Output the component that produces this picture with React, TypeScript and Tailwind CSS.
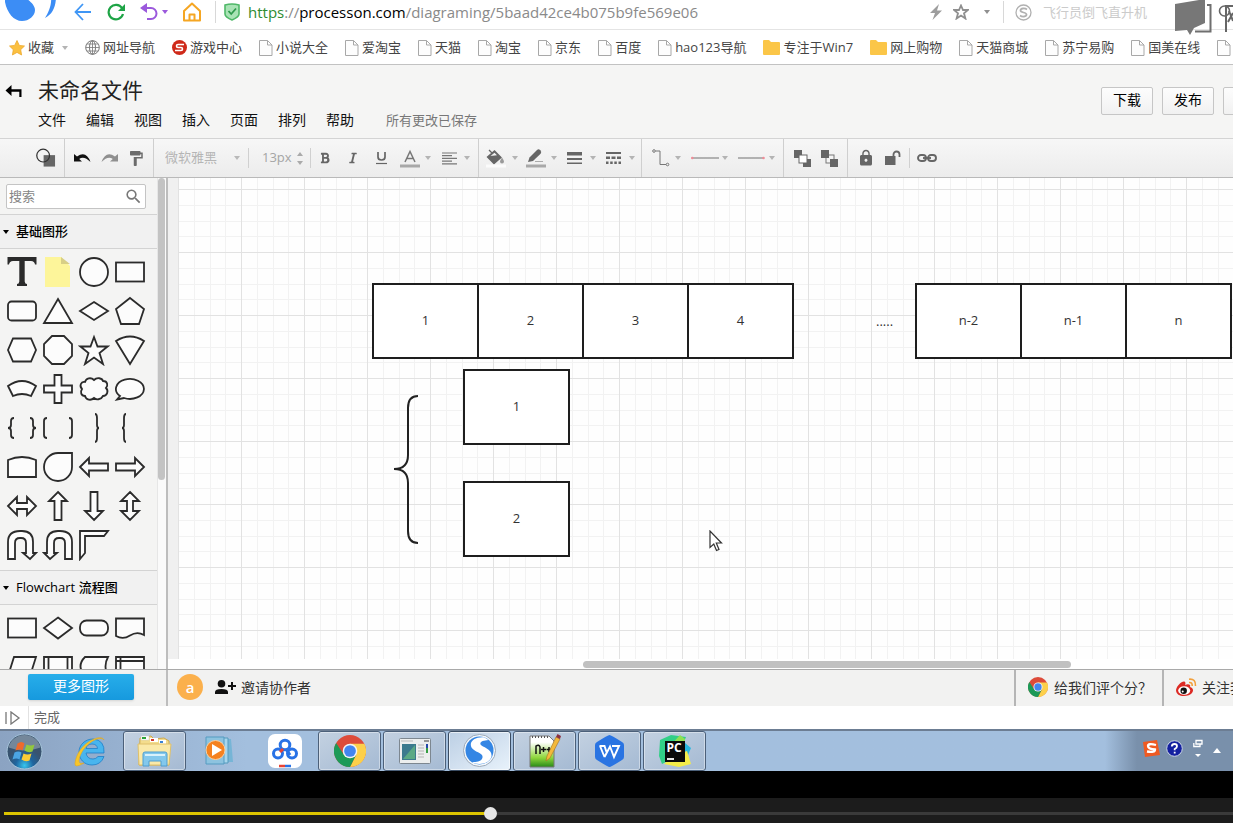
import React from 'react';
import { MdLock, MdFormatPaint, MdSearch } from 'react-icons/md';
import { FaBold, FaItalic } from 'react-icons/fa';

type Kids = { children?: React.ReactNode };

const Caret = ({ className = 'fill-[#b4b4b4]' }: { className?: string }) => (
  <svg className={`shrink-0 ${className}`} width="6" height="4" viewBox="0 0 6 4" aria-hidden="true">
    <path d="M0 0h6L3 4z" />
  </svg>
);

const Chrome = ({ size }: { size: number }) => (
  <svg width={size} height={size} viewBox="-12 -12 24 24" aria-hidden="true">
    <circle r="12" fill="#dd4b3a" />
    <path d="M0-5.4H10.8A12 12 0 0 1 0 12L4.7 2.7Z" fill="#fcd04b" />
    <path d="M-10.4-6L-4.7 2.7 0 5.5 4.7 2.7 0 12A12 12 0 0 1-10.4-6Z" fill="#1d9a58" />
    <circle r="5.5" fill="#f4f4f4" />
    <circle r="4.4" fill="#4385f0" />
  </svg>
);

/* ---------- browser chrome ---------- */

function AddressBar() {
  return (
    <header className="relative flex h-[30px] shrink-0 items-center border-b border-[#e4e4e4] bg-white pb-[5px]">
      <svg className="-mt-[4px] ml-[5px] h-[29px] w-[56px] shrink-0" viewBox="0 0 56 29" aria-hidden="true">
        <path d="M0 6V0H18C22 3 30 8 30 14C30 20 24 25 17 25C9 25 2 17 0 6Z" fill="#3c8df5" />
        <path d="M49 0H51C51 10 48 18 40 22C44 16 47 8 46 0Z" fill="#3c8df5" />
      </svg>
      <button aria-label="后退" className="ml-[13px] shrink-0">
        <svg width="18" height="18" viewBox="0 0 18 18" fill="none" stroke="#3f96f5" strokeWidth="1.8">
          <path d="M9 1L1.5 9L9 17M1.5 9H17" />
        </svg>
      </button>
      <button aria-label="刷新" className="ml-[14px] shrink-0">
        <svg width="20" height="18" viewBox="0 0 20 18" fill="none" stroke="#1ea446" strokeWidth="2.2">
          <path d="M16 5A7.3 7.3 0 1 0 17 11" />
          <path d="M19 1V8H12Z" fill="#1ea446" stroke="none" />
        </svg>
      </button>
      <button aria-label="恢复" className="ml-[14px] flex shrink-0 items-center gap-1">
        <svg width="18" height="18" viewBox="0 0 18 18" fill="none" stroke="#9b59dc" strokeWidth="2">
          <path d="M3 5H11A5.5 5.5 0 0 1 11 16H7" />
          <path d="M7 0V10L0 5Z" fill="#9b59dc" stroke="none" />
        </svg>
        <Caret className="fill-[#9b59dc]" />
      </button>
      <button aria-label="主页" className="ml-[15px] shrink-0">
        <svg width="18" height="20" viewBox="0 0 18 20" fill="none" stroke="#f5a623" strokeWidth="2" strokeLinejoin="round">
          <path d="M1 9L9 1.500L17 9V18.500H1ZM6.500 18V12.500H11.500V18" />
        </svg>
      </button>
      <span className="ml-[14px] h-[22px] w-px shrink-0 bg-[#d8d8d8]" />
      <svg className="ml-2 shrink-0" width="16" height="18" viewBox="0 0 16 18" aria-hidden="true">
        <path d="M1 2Q8 0 15 2V11Q15 14 8 17Q1 14 1 11Z" fill="#a9e3b5" stroke="#4fb868" strokeWidth="1.6" />
        <path d="M4.5 8L7.2 11L12 5.5" fill="none" stroke="#2f9a4d" strokeWidth="1.8" />
      </svg>
      <p className="ml-[8px] flex-1 truncate text-[15px] leading-6 text-[#8a8a8a]">
        <span className="text-[#2e8b30]">https</span>://<span className="text-black">processon.com</span>/diagraming/5baad42ce4b075b9fe569e06
      </p>
      <button aria-label="快速模式" className="shrink-0">
        <svg width="14" height="18" viewBox="0 0 14 18" fill="#9d9d9d"><path d="M10 1L1 10H6L3.500 17L13 7.500H8Z" /></svg>
      </button>
      <button aria-label="收藏此页" className="ml-[10px] shrink-0">
        <svg width="16" height="16" viewBox="0 0 16 16" fill="none" stroke="#8f8f8f" strokeWidth="1.8">
          <path d="M8 1.5L10 6H15L11 9.3L12.4 14.5L8 11.5L3.6 14.5L5 9.3L1 6H6Z" />
        </svg>
      </button>
      <span className="ml-[15px] flex"><Caret className="fill-[#8f8f8f]" /></span>
      <span className="ml-[13px] h-[22px] w-px shrink-0 bg-[#d8d8d8]" />
      <svg className="ml-[11px] shrink-0" width="17" height="17" viewBox="0 0 17 17" fill="none" stroke="#b0b0b0" aria-hidden="true">
        <circle cx="8.5" cy="8.5" r="7.5" strokeWidth="1.3" />
        <path d="M12 5.5C10 4 5.5 4 5.5 6.5C5.5 9 11.5 8 11.5 10.5C11.5 13 7 13 5 11.5" strokeWidth="1.8" />
      </svg>
      <input aria-label="搜索" placeholder="飞行员倒飞直升机" className="ml-[11px] w-[190px] shrink-0 bg-transparent text-[13px] leading-5 outline-none placeholder:text-[#cbcbcb]" />
      <svg className="absolute right-0 -top-px" width="60" height="37" viewBox="0 0 60 37" aria-hidden="true">
        <path d="M34 6H37.500V32.500H22" fill="none" stroke="#6f6f6f" strokeWidth="2" />
        <path d="M2 5L32 0V24L21 29L17 36L14 31L2 32Z" fill="#777" />
        <g fill="none" stroke="#666" strokeWidth="1.6">
          <circle cx="51.500" cy="12" r="5" />
          <path d="M53 33V7H60M60 14L55 23M56 12L60 22" strokeWidth="2" />
        </g>
      </svg>
    </header>
  );
}

const Page = () => (
  <svg width="14" height="16" viewBox="0 0 14 16" fill="#fdfdfd" stroke="#a8a8a8" aria-hidden="true">
    <path d="M.5.5H8.500L13 5V15.500H.5ZM8.500.5V5H13" />
  </svg>
);
const Folder = () => (
  <svg width="17" height="15" viewBox="0 0 17 15" fill="#fbc648" aria-hidden="true">
    <path d="M0 1Q0 0 1 0H6L8 2H16Q17 2 17 3V14Q17 15 16 15H1Q0 15 0 14Z" />
  </svg>
);
const Globe = () => (
  <svg width="15" height="15" viewBox="0 0 15 15" fill="none" stroke="#777" aria-hidden="true">
    <circle cx="7.500" cy="7.500" r="6.800" />
    <ellipse cx="7.500" cy="7.500" rx="3" ry="6.800" />
    <path d="M.7 7.500H14.300M2 4H13M2 11H13M7.500.7V14.300" strokeWidth=".8" />
  </svg>
);
const Game = () => (
  <svg width="15" height="15" viewBox="0 0 15 15" aria-hidden="true">
    <circle cx="7.500" cy="7.500" r="7.500" fill="#cf2a1a" />
    <path d="M12 4.500H6Q4.500 4.500 4.500 6T6 7.500H9Q10.500 7.500 10.500 9T9 10.500H3" fill="none" stroke="#fff" strokeWidth="1.600" />
  </svg>
);

const bookmarks: [string, () => React.JSX.Element][] = [
  ['网址导航', Globe], ['游戏中心', Game], ['小说大全', Page], ['爱淘宝', Page], ['天猫', Page],
  ['淘宝', Page], ['京东', Page], ['百度', Page], ['hao123导航', Page], ['专注于Win7', Folder],
  ['网上购物', Folder], ['天猫商城', Page], ['苏宁易购', Page], ['国美在线', Page], ['优惠', Page],
];

function Bookmarks() {
  return (
    <nav className="flex h-[35px] shrink-0 items-center gap-[17px] overflow-hidden border-b border-[#c2c2c2] bg-white pt-px pl-[9px] text-[13px] text-[#444]">
      <button className="flex shrink-0 items-center">
        <svg width="16" height="16" viewBox="0 0 16 16" aria-hidden="true">
          <path d="M8 .5L10.300 5.400L15.500 6L11.700 9.700L12.600 15L8 12.400L3.400 15L4.300 9.700L.5 6L5.700 5.400Z" fill="#fbc040" stroke="#eda92e" strokeWidth=".8" />
        </svg>
        <span className="mr-2 ml-[3px]">收藏</span>
        <Caret />
      </button>
      {bookmarks.map(([label, Icon]) => (
        <a key={label} href="#" className="flex shrink-0 items-center gap-[3px] whitespace-nowrap">
          <Icon />
          {label}
        </a>
      ))}
    </nav>
  );
}

/* ---------- editor header ---------- */

const PlainButton = ({ children }: Kids) => (
  <button className="h-[28px] w-[52px] shrink-0 rounded-[2px] border border-[#c6c6c6] bg-linear-to-b from-[#fdfdfd] to-[#f1f1f1] pb-[3px] text-[14px] leading-5 text-black">
    {children}
  </button>
);

function EditorHeader() {
  return (
    <div className="flex h-[74px] shrink-0 justify-between overflow-hidden border-b border-[#d4d4d4] bg-[#f5f5f4]">
      <div className="flex">
        <button aria-label="返回" className="mt-[19px] ml-[5px] h-4">
          <svg width="18" height="14" viewBox="0 0 18 14" aria-hidden="true">
            <path d="M.5 5.500L6.500 0V4.200H16.500V12H14.300V6.800H6.500V11Z" fill="#000" />
          </svg>
        </button>
        <div className="ml-[15px] pt-[10px]">
          <h1 className="text-[21px] leading-[30px] text-[#222]">未命名文件</h1>
          <div className="flex items-center gap-5 text-[14px] leading-[30px] text-[#111]">
            {['文件', '编辑', '视图', '插入', '页面', '排列', '帮助'].map((m) => (
              <button key={m}>{m}</button>
            ))}
            <span className="ml-[12px] text-[13px] text-[#777]">所有更改已保存</span>
          </div>
        </div>
      </div>
      <div className="-mr-[42px] flex gap-[9px] pt-[22px]">
        <PlainButton>下载</PlainButton>
        <PlainButton>发布</PlainButton>
        <PlainButton>分享</PlainButton>
      </div>
    </div>
  );
}

/* ---------- toolbar ---------- */

const Group = ({ children, className = '' }: Kids & { className?: string }) => (
  <div className={`flex h-full shrink-0 items-center border-r border-[#cfcfcf] ${className}`}>{children}</div>
);
const Tool = ({ label, children, className = 'w-[18px]' }: Kids & { label: string; className?: string }) => (
  <button aria-label={label} className={`flex h-6 shrink-0 items-center justify-center ${className}`}>{children}</button>
);
const Drop = ({ label, children, className = 'w-[39px]' }: Kids & { label: string; className?: string }) => (
  <button aria-label={label} className={`flex h-6 shrink-0 items-center justify-between pr-[3px] pl-1 ${className}`}>
    {children}
    <Caret />
  </button>
);
const Rule = () => <span className="h-5 w-px shrink-0 bg-[#d0d0d0]" />;

function Toolbar() {
  return (
    <div className="flex h-[39px] shrink-0 items-center overflow-hidden border-b border-[#b9b9b9] bg-linear-to-b from-[#f7f7f7] to-[#ececec] text-[#666]">
      <Group className="w-[65px] justify-end pr-2">
        <Tool label="图形" className="w-5">
          <svg width="21" height="20" viewBox="0 0 21 20">
            <rect x="8" y="7" width="12" height="12" fill="#666" />
            <circle cx="7.500" cy="7.500" r="6.700" fill="none" stroke="#333" strokeWidth="1.300" />
          </svg>
        </Tool>
      </Group>
      <Group className="gap-[9px] px-2">
        <Tool label="撤销">
          <svg width="17" height="10" viewBox="0 0 17 10"><path d="M0 1V8.500H8L5.200 6Q10 2.500 16.500 9Q12-3 3 3.600Z" fill="#111" /></svg>
        </Tool>
        <Tool label="重做">
          <svg width="17" height="10" viewBox="0 0 17 10"><path d="M17 1V8.500H9L11.800 6Q7 2.500.5 9Q5-3 14 3.600Z" fill="#8f8f8f" /></svg>
        </Tool>
        <Tool label="格式刷"><MdFormatPaint className="size-[19px] text-[#6b6b6b]" /></Tool>
      </Group>
      <Group className="pr-[5px] pl-[11px]">
        <label className="flex items-center text-[13px] text-[#b5b5b5]">
          <select aria-label="字体" className="w-[69px] appearance-none bg-transparent outline-none">
            <option>微软雅黑</option>
          </select>
          <Caret className="mr-2 fill-[#b9b9b9]" />
        </label>
        <Rule />
        <input aria-label="字号" defaultValue="13px" className="ml-[13px] w-[35px] bg-transparent text-[13px] text-[#a5a5a5] outline-none" />
        <svg className="mr-[7px]" width="6" height="13" viewBox="0 0 6 13" fill="#aaa" aria-hidden="true"><path d="M0 4L3 0L6 4ZM0 9L3 13L6 9Z" /></svg>
        <Rule />
        <Tool label="加粗" className="w-7"><FaBold className="size-3" /></Tool>
        <Tool label="斜体" className="w-7"><FaItalic className="size-3" /></Tool>
        <Tool label="下划线" className="w-7">
          <svg width="11" height="14" viewBox="0 0 11 14" fill="none" stroke="#666"><path d="M2 1V6Q2 9 5.500 9T9 6V1" strokeWidth="1.700" /><path d="M0 12.500H11" strokeWidth="1.200" /></svg>
        </Tool>
        <Drop label="文字颜色">
          <svg width="22" height="20" viewBox="0 0 22 20" fill="none" stroke="#777"><path d="M6 14L11 3.500L16 14M7.800 10.500H14.200" strokeWidth="1.500" /><path d="M1 18H21" stroke="#a8a8a8" strokeWidth="3" /></svg>
        </Drop>
        <Drop label="对齐">
          <svg className="ml-1" width="16" height="13" viewBox="0 0 16 13" stroke="#777" strokeWidth="1.200"><path d="M0 1H15M0 3.700H10M0 6.400H15M0 9.100H10M0 11.800H15" /></svg>
        </Drop>
      </Group>
      <Group className="px-[3px]">
        <Drop label="填充颜色">
          <svg width="20" height="20" viewBox="0 0 20 20">
            <path d="M3 2L6 5M1.500 9L8.500 3L15 9.500L8 15.500Z" fill="#666" stroke="#666" strokeWidth="1.300" />
            <path d="M4.500 8L8.500 4.800L11 7.300Z" fill="#f2f2f2" />
            <path d="M16 9.500Q18 12.500 18 13.500A2 2 0 0 1 14 13.500Q14 12.500 16 9.500Z" fill="#999" />
            <path d="M0 18H20" stroke="#fbfbfb" strokeWidth="3" />
          </svg>
        </Drop>
        <Drop label="线条颜色">
          <svg width="22" height="20" viewBox="0 0 22 20"><path d="M3 14L4.500 9.500L12 2Q13.500 .5 15.300 2.200T15.600 5.700L8 13Z" fill="#666" /><path d="M10 13.500H18" stroke="#aaa" /><path d="M1 18H21" stroke="#a8a8a8" strokeWidth="3" /></svg>
        </Drop>
        <Drop label="线条宽度">
          <svg className="ml-[3px]" width="15" height="12" viewBox="0 0 15 12" fill="#666"><path d="M0 0H15V3.500H0ZM0 6H15V8H0ZM0 10.500H15V12H0Z" /></svg>
        </Drop>
        <Drop label="线条样式">
          <svg className="ml-[3px]" width="15" height="12" viewBox="0 0 15 12" fill="#666"><path d="M0 0H15V2H0ZM0 4.500H4V7H0ZM5.500 4.500H9.500V7H5.500ZM11 4.500H15V7H11ZM0 9.500H2.500V12H0ZM4.200 9.500H6.700V12H4.200ZM8.300 9.500H10.800V12H8.300ZM12.500 9.500H15V12H12.500Z" /></svg>
        </Drop>
      </Group>
      <Group className="pr-[5px] pl-[3px]">
        <Drop label="连线类型">
          <svg className="ml-[3px]" width="18" height="18" viewBox="0 0 18 18" fill="none" stroke="#777"><path d="M3.500 2H8V15.500H14" /><circle cx="2" cy="2" r="1.300" /><circle cx="15.500" cy="15.500" r="1.300" /></svg>
        </Drop>
        <Drop label="起点" className="w-[47px]">
          <svg className="ml-[3px]" width="28" height="4" viewBox="0 0 28 4"><path d="M1 2H28" stroke="#888" strokeWidth="1.200" /><circle cx="1.300" cy="2" r="1.300" fill="#ee8d98" /></svg>
        </Drop>
        <Drop label="终点" className="w-[47px]">
          <svg className="ml-[3px]" width="28" height="4" viewBox="0 0 28 4"><path d="M0 2H26" stroke="#888" strokeWidth="1.200" /><circle cx="25.500" cy="2" r="1.300" fill="#ee8d98" /></svg>
        </Drop>
      </Group>
      <Group className="gap-[9px] px-[9px]">
        <Tool label="置于顶层">
          <svg width="17" height="17" viewBox="0 0 17 17" fill="#666"><path d="M0 0H8V8H0ZM9 9H17V17H9Z" /><rect x="5" y="5" width="8" height="8" fill="#fff" stroke="#666" /></svg>
        </Tool>
        <Tool label="置于底层">
          <svg width="17" height="17" viewBox="0 0 17 17" fill="#666"><rect x="5" y="5" width="8" height="8" fill="#f4f4f4" stroke="#777" /><path d="M0 0H8V8H0ZM9 9H17V17H9Z" /></svg>
        </Tool>
      </Group>
      <div className="flex shrink-0 items-center pl-1">
        <Tool label="锁定" className="w-[27px]"><MdLock className="size-[18px]" /></Tool>
        <Tool label="解锁" className="w-[27px]">
          <svg width="16" height="16" viewBox="0 0 16 16"><path d="M0 6H10.500V15H0Z" fill="#666" /><path d="M8.500 6V4.500A3 3 0 0 1 14.500 4.500V7" fill="none" stroke="#666" strokeWidth="1.800" /></svg>
        </Tool>
        <span className="flex px-[3px]"><Rule /></span>
        <Tool label="链接" className="w-7">
          <svg width="20" height="8" viewBox="0 0 20 8" fill="none" stroke="#666" strokeWidth="1.900">
            <rect x="1" y="1" width="8" height="6" rx="3" />
            <rect x="11" y="1" width="8" height="6" rx="3" />
            <path d="M6 4H14" />
          </svg>
        </Tool>
      </div>
    </div>
  );
}

/* ---------- shape library ---------- */

const basic: [string, React.ReactNode][] = [
  ['文本', <path fill="#2b2b2b" stroke="none" d="M-14.500-15H14.500V-7.500H13Q12.500-11 9-11H2.700V9.500Q3 12 5 12V14H-5V12Q-3 12-2.700 9.500V-11H-9Q-12.500-11-13-7.500H-14.500Z" />],
  ['便签', <g stroke="none"><path fill="#fdf59a" d="M-13-15H3L12-6V15H-13Z" /><path fill="#d8cf86" d="M3-15L12-8H3Z" /></g>],
  ['圆形', <circle r="14" />],
  ['矩形', <rect x="-14" y="-9.500" width="28" height="19" />],
  ['圆角矩形', <rect x="-14" y="-9.500" width="28" height="19" rx="3.500" />],
  ['三角形', <path d="M0-12L14 12H-14Z" />],
  ['菱形', <path d="M0-9L14 0 0 9-14 0Z" />],
  ['五边形', <path d="M0-13L14-2 9 13H-9L-14-2Z" />],
  ['六边形', <path d="M-9-11.500H9L14 0 9 11.500H-9L-14 0Z" />],
  ['八边形', <path d="M-6-14H6L14-6V6L6 14H-6L-14 6V-6Z" />],
  ['五角星', <path d="M0-13L3.500-3.500H13.500L5.500 3 9 14 0 7.500-9 14-5.500 3-13.500-3.500H-3.500Z" />],
  ['扇形', <path d="M-14-9Q0-18 14-9L0 14Z" />],
  ['弧形', <path d="M-14-3Q0-13 14-3L9 7Q0 3-9 7Z" />],
  ['十字', <path d="M-3.500-14H3.500V-3.500H14V3.500H3.500V14H-3.500V3.500H-14V-3.500H-3.500Z" />],
  ['云', <path d="M-9-7C-8-11-3-12 0-9C3-12 8-11 9-8C14-8 14-3 12-1C15 2 13 7 9 7C7 11 2 11 0 9C-3 12-8 11-9 7C-13 7-14 3-12 0C-15-3-13-8-9-7Z" />],
  ['气泡', <path d="M-10 7A14 10 0 1 1-6 9L-13 10.500Z" />],
  ['大括号', <path fill="none" d="M-8-10Q-11-10-11-7V-3Q-11 0-14 0Q-11 0-11 3V7Q-11 10-8 10M8-10Q11-10 11-7V-3Q11 0 14 0Q11 0 11 3V7Q11 10 8 10" />],
  ['中括号', <path fill="none" d="M-11-10Q-14-10-14-7V7Q-14 10-11 10M11-10Q14-10 14-7V7Q14 10 11 10" />],
  ['右大括号', <path fill="none" d="M1-14Q3-14 3-10V-3Q3 0 5 0Q3 0 3 3V10Q3 14 1 14" />],
  ['左大括号', <path fill="none" d="M-4-14Q-6-14-6-10V-3Q-6 0-8 0Q-6 0-6 3V10Q-6 14-4 14" />],
  ['拱顶', <path d="M-14-7Q0-13 14-7V10H-14Z" />],
  ['水滴', <path d="M14-14H0A14 14 0 1 0 14 0Z" />],
  ['左箭头', <path d="M-14 0L-5-9V-3.500H14V3.500H-5V9Z" />],
  ['右箭头', <path d="M14 0L5-9V-3.500H-14V3.500H5V9Z" />],
  ['双向箭头', <path d="M-14 0L-5-9V-3H5V-9L14 0 5 9V3H-5V9Z" />],
  ['上箭头', <path d="M0-14L9-5H3.500V14H-3.500V-5H-9Z" />],
  ['下箭头', <path d="M0 14L9 5H3.500V-14H-3.500V5H-9Z" />],
  ['上下箭头', <path d="M0-14L9-5H3V5H9L0 14-9 5H-3V-5H-9Z" />],
  ['右转箭头', <path d="M-14 14V-3Q-14-14-2-14H0Q11-14 11-3V8H14L8 14 1 8H4V-2Q4-7-1-7H-2Q-7-7-7-2V14Z" />],
  ['左转箭头', <path d="M14 14V-3Q14-14 2-14H0Q-11-14-11-3V8H-14L-8 14-1 8H-4V-2Q-4-7 1-7H2Q7-7 7-2V14Z" />],
  ['角形', <path d="M-14-14H14L10-9H-9V8L-14 14Z" />],
];

const flow: [string, React.ReactNode][] = [
  ['流程', <rect x="-14" y="-9.500" width="28" height="19" />],
  ['判定', <path d="M0-10.500L14 0 0 10.500-14 0Z" />],
  ['开始结束', <rect x="-14" y="-7.500" width="28" height="15" rx="6.500" />],
  ['文档', <path d="M-14-9.500H14V7Q7 3 0 7.500T-14 8Z" />],
  ['数据', <path d="M-8-10H14L8 9H-14Z" />],
  ['子流程', <path d="M-14-10H14V9H-14ZM-9.500-10V9M9.500-10V9" />],
  ['外部数据', <path d="M-9-10H14Q9-1 14 9H-9Q-18-1-9-10Z" />],
  ['内部存储', <path d="M-14-10H14V9H-14ZM-14-6H14M-9.500-10V9" />],
];

const Shapes = ({ items }: { items: [string, React.ReactNode][] }) => (
  <div className="grid auto-rows-[39px] grid-cols-[repeat(4,36px)] pt-[3px] pl-1">
    {items.map(([name, shape]) => (
      <button key={name} aria-label={name} className="flex items-center justify-center">
        <svg width="32" height="32" viewBox="-16 -16 32 32" fill="#fcfcfc" stroke="#2b2b2b" strokeWidth="1.800">{shape}</svg>
      </button>
    ))}
  </div>
);

const SectionTitle = ({ children }: Kids) => (
  <h2 className="border-y border-[#d3d3d3] bg-[#f1f1f1]">
    <button className="flex h-[33px] w-full items-center gap-[7px] pl-[3px] text-[13px] font-medium text-black">
      <Caret className="fill-black" />
      {children}
    </button>
  </h2>
);

function Sidebar() {
  return (
    <aside className="flex w-[168px] shrink-0 overflow-hidden border-r-2 border-[#bdbdbd] bg-[#fafafa]">
      <div className="min-h-0 w-[158px] overflow-hidden border-r border-[#e6e6e6] bg-[#f4f4f3]">
        <label className="mx-[6px] mt-[6px] mb-[5px] flex h-[25px] w-[140px] items-center justify-between rounded-[2px] border border-[#c4c4c4] bg-white pr-[2px] pl-[2px]">
          <input aria-label="搜索图形" placeholder="搜索" className="w-24 bg-transparent text-[13px] outline-none placeholder:text-[#858585]" />
          <MdSearch className="size-[19px] text-[#777]" />
        </label>
        <SectionTitle>基础图形</SectionTitle>
        <Shapes items={basic} />
        <div className="h-[6px]" />
        <SectionTitle>Flowchart 流程图</SectionTitle>
        <Shapes items={flow} />
      </div>
      <div className="h-[302px] w-[7px] rounded-full bg-[#c3c3c3]" />
    </aside>
  );
}

/* ---------- drawing canvas ---------- */

const nodes = [
  { x: 194, y: 105, t: '1' }, { x: 299, y: 105, t: '2' }, { x: 404, y: 105, t: '3' }, { x: 509, y: 105, t: '4' },
  { x: 737, y: 105, t: 'n-2' }, { x: 842, y: 105, t: 'n-1' }, { x: 947, y: 105, t: 'n' },
  { x: 285, y: 191, t: '1' }, { x: 285, y: 303, t: '2' },
];

function Canvas() {
  return (
    <main className="flex min-w-0 flex-1 flex-col bg-white">
      <div className="relative min-h-0 flex-1 overflow-hidden border-l-[10px] border-[#f0f0f0] bg-[#fefefe]">
        <svg className="absolute inset-0 h-full w-full" aria-hidden="true">
          <defs>
            <pattern id="grid" width="63" height="63" y="11" patternUnits="userSpaceOnUse">
              <path d="M16.500 0V63M32.500 0V63M47.500 0V63M0 16.500H63M0 32.500H63M0 47.500H63" stroke="#f2f2f2" />
              <path d="M.5 0V63M0 .5H63" stroke="#e2e2e2" />
            </pattern>
          </defs>
          <rect width="100%" height="100%" fill="url(#grid)" />
        </svg>
        {nodes.map((n) => (
          <div
            key={`${n.x}-${n.y}`}
            className="absolute flex h-[76px] w-[107px] items-center justify-center border-2 border-[#1e1e1e] bg-white text-[13px] text-[#333]"
            style={{ left: n.x, top: n.y }}
          >
            {n.t}
          </div>
        ))}
        <span className="absolute top-[133px] left-[698px] text-[13px] leading-5 text-[#333]">.....</span>
        <svg className="absolute top-[217px] left-[215px]" width="26" height="150" viewBox="0 0 26 150" fill="none" stroke="#222" strokeWidth="2">
          <path d="M25 1Q15 1 15 13V60Q15 74 1 74Q15 74 15 88V136Q15 148 25 148" />
        </svg>
        <svg className="absolute top-[352px] left-[531px]" width="14" height="22" viewBox="0 0 14 22" fill="#fff" stroke="#333" strokeWidth="1.200">
          <path d="M1 1V17.500L4.800 14L7.500 20.500L10 19.500L7.300 13H12.500Z" />
        </svg>
      </div>
      <div className="flex h-[10px] shrink-0 items-center bg-white pl-[39%]">
        <div className="h-[7px] w-3/4 rounded-full bg-[#c1c1c1]" />
      </div>
    </main>
  );
}

/* ---------- footer, status, taskbar ---------- */

function Footer() {
  return (
    <footer className="flex h-[37px] shrink-0 overflow-hidden border-t border-[#a9a9a9] bg-[#f2f2f1] text-[14px] text-[#333]">
      <div className="w-[168px] shrink-0 border-r-2 border-[#bdbdbd] pt-1 pl-7">
        <button className="h-[26px] w-[106px] rounded-[2px] bg-linear-to-b from-[#27aeea] to-[#1699de] pb-[3px] text-[14px] leading-5 text-white shadow-sm">更多图形</button>
      </div>
      <div className="flex min-w-0 flex-1 items-center pb-[2px] pl-[9px]">
        <span className="flex size-[26px] items-center justify-center rounded-full bg-[#fbb04c] text-[15px] font-semibold text-white">a</span>
        <button className="ml-3 flex items-center gap-[5px]">
          <svg width="21" height="15" viewBox="0 0 21 15" fill="#111" aria-hidden="true">
            <circle cx="6.500" cy="3.800" r="3.800" />
            <path d="M0 14V12Q0 9 6.500 9T13 12V14ZM16 2H18V5H21V7H18V10H16V7H13V5H16Z" />
          </svg>
          邀请协作者
        </button>
      </div>
      <a href="#" className="flex w-[148px] shrink-0 items-center gap-[6px] border-l-2 border-[#b5b5b5] pb-[2px] pl-3 whitespace-nowrap">
        <Chrome size={20} />
        给我们评个分？
      </a>
      <a href="#" className="flex w-[71px] shrink-0 items-center gap-[5px] overflow-hidden border-l-2 border-[#b5b5b5] pb-[2px] pl-3 whitespace-nowrap">
        <svg className="shrink-0" width="21" height="19" viewBox="0 0 21 19" aria-hidden="true">
          <path d="M0 12C1 7 7 2 9 4C10 5 9 7 9 7C13 5 15 7 14 9C17 10 18 12 16 15C13 19 0 20 0 12Z" fill="#dc2a24" />
          <ellipse cx="8.200" cy="12.500" rx="6" ry="4.300" fill="#fff" />
          <circle cx="7.700" cy="12.700" r="3.200" fill="#111" />
          <circle cx="6.700" cy="13.500" r="1" fill="#fff" />
          <path d="M13 1.200Q20 .5 19.500 8M13 4.500Q16.500 4 16.200 8" fill="none" stroke="#f2a03c" strokeWidth="1.600" />
        </svg>
        关注我们
      </a>
    </footer>
  );
}

function Status() {
  return (
    <div className="flex h-[23px] shrink-0 items-center bg-white text-[13px] text-[#666]">
      <button aria-label="展开" className="flex w-[29px] shrink-0 self-stretch border-r border-[#e2e2e2] pt-[5px] pl-[5px]">
        <svg width="16" height="14" viewBox="0 0 16 14" fill="none" stroke="#777" strokeWidth="1.300"><path d="M1 1V13M6 1L14 7L6 13Z" /></svg>
      </button>
      <span className="ml-[5px]">完成</span>
    </div>
  );
}

const apps: { name: string; open?: boolean; active?: boolean; icon: React.ReactNode }[] = [
  { name: 'Internet Explorer', icon: (
    <svg width="34" height="34" viewBox="0 0 34 34">
      <path d="M31 19H13Q14 25 20 25Q23 25 25 22.500H31Q28 31 19 31C11 31 6 25 6 18S12 5 20 5Q32 6 31 19ZM13 14.500H24.500Q24 10 19 10T13 14.500Z" fill="#48b5ee" stroke="#1f7fc8" strokeWidth=".8" />
      <path d="M31 6C29-1 5 8 2 29Q1 35 11 29C5 31 5 26 8 20C13 9 27 1 31 6Z" fill="#f7c52a" stroke="#e0a417" strokeWidth=".5" />
    </svg>) },
  { name: '资源管理器', open: true, icon: (
    <svg width="35" height="32" viewBox="0 0 35 32">
      <path d="M3 3L14 1L17 4L27 3L32 6V30H2Z" fill="#f3dc8d" stroke="#cda94e" />
      <path d="M4 1H12V5H4Z" fill="#fff" stroke="#ccc" strokeWidth=".5" /><path d="M5 2H9V4H5Z" fill="#2aa33a" />
      <path d="M13 3H21V7H13Z" fill="#fff" /><path d="M14 4H17V6H14Z" fill="#d5392b" /><path d="M22 5H29V9H22Z" fill="#fff" /><path d="M23 6H26V8H23Z" fill="#3a82d5" />
      <path d="M1 9H34L32 30H2Z" fill="#fae9a9" stroke="#dfc06a" />
      <path d="M6 31V19Q6 17 8 17H28Q30 17 30 19V31H24V26H12V31Z" fill="#83c8ec" stroke="#4f9ed0" />
      <path d="M8 20H28" stroke="#d8f1fb" strokeWidth="2" />
    </svg>) },
  { name: '媒体播放器', icon: (
    <svg width="31" height="29" viewBox="0 0 31 29">
      <path d="M10 3H27L29 26H10Z" fill="#76b5d6" /><path d="M6 2H24V27H6Z" fill="#a8d6ec" stroke="#559abc" /><path d="M2 1H20V28H2Z" fill="#8dc3df" stroke="#549bc1" />
      <circle cx="11.500" cy="14" r="9.500" fill="#f58220" stroke="#fbd0a2" /><path d="M8 8L18 14L8 20Z" fill="#fff" />
    </svg>) },
  { name: '百度网盘', icon: (
    <svg width="34" height="34" viewBox="0 0 34 34">
      <rect width="34" height="34" rx="7" fill="#fff" />
      <g fill="none" strokeWidth="3"><circle cx="17" cy="11" r="4.800" stroke="#2872e6" /><circle cx="10" cy="19.500" r="4.500" stroke="#2872e6" /><circle cx="24" cy="19.500" r="4.500" stroke="#2872e6" /><path d="M15 15L12 18" stroke="#e84335" /><path d="M18 15L22 21" stroke="#2872e6" /></g>
      <path d="M11 32H17" stroke="#e84335" strokeWidth="2.500" /><path d="M17 32H23" stroke="#2872e6" strokeWidth="2.500" />
    </svg>) },
  { name: 'Chrome', open: true, icon: <Chrome size={32} /> },
  { name: '窗口', open: true, icon: (
    <svg width="32" height="26" viewBox="0 0 32 26">
      <rect x=".5" y=".5" width="31" height="25" rx="1" fill="#eceeee" stroke="#7d8790" />
      <path d="M2 3H14" stroke="#bbb" /><path d="M25 3H30" stroke="#777" strokeWidth="1.500" /><rect x="3" y="6" width="14" height="16" fill="#3b7a8e" /><path d="M4 21L16 7V21Z" fill="#5aa985" />
      <path d="M19 7H25M19 10H25M19 13H25M19 16H25M19 19H25" stroke="#b4b4b4" /><path d="M27 6H29V10H27Z" fill="#2349a8" /><path d="M27 10H29V15H27Z" fill="#349e42" />
    </svg>) },
  { name: '搜狗浏览器', open: true, active: true, icon: (
    <svg width="33" height="33" viewBox="-16.500 -16.500 33 33">
      <circle r="16" fill="#f4f8fc" stroke="#9ba9b9" /><circle r="14" fill="#3486e4" />
      <path d="M5-13C-4-14-11-9-8-3C-5 2 4 2 3 7C2 11-3 12-8 11.500C-2 15 10 14 12 6C13-2 3-3 1-6C0-9 4-10 9-10.500Z" fill="#fff" />
    </svg>) },
  { name: 'Notepad++', open: true, icon: (
    <svg width="32" height="34" viewBox="0 0 32 34">
      <defs><linearGradient id="np" x1="0" y1="0" x2="0" y2="1"><stop offset=".2" stopColor="#fff" /><stop offset=".7" stopColor="#8fd63c" /><stop offset="1" stopColor="#278a18" /></linearGradient></defs>
      <path d="M1 2H20L25 7V33H1Z" fill="url(#np)" stroke="#777" /><path d="M3 3H19" stroke="#555" strokeDasharray="1 2" strokeWidth="2" />
      <path d="M7 20V12Q10 10 11 13V20M12 15.500H17M14.500 13V18M17.500 15.500H22.500M20 13V18" fill="none" stroke="#111" strokeWidth="1.500" />
      <path d="M17 27L18 22L27 3L31 5L21 24Z" fill="#f3b93b" stroke="#a86f22" strokeWidth=".6" /><path d="M27 3L28.500 0L32 2L31 5Z" fill="#8c3140" />
    </svg>) },
  { name: 'WPS', open: true, icon: (
    <svg width="31" height="34" viewBox="0 0 31 34">
      <path d="M15.500 1Q17 1 28 8Q30 9 30 11V23Q30 25 28 26Q17 33 15.500 33T3 26Q1 25 1 23V11Q1 9 3 8Q14 1 15.500 1Z" fill="#2a74e2" />
      <path d="M5.500 12H10.500L12.500 18M10.500 23L6 12M10.500 23L16 12.500L20 23L25 12H18" fill="none" stroke="#fff" strokeWidth="1.900" />
    </svg>) },
  { name: 'PyCharm', open: true, icon: (
    <svg width="34" height="34" viewBox="0 0 34 34">
      <path d="M2 6L13 1L28 3L20 22L4 30L1 22Z" fill="#32cf87" /><path d="M22 1L27 5L26 18L12 12Z" fill="#8fe052" /><path d="M27 9L33 14L30 21L22 16Z" fill="#29b7df" /><path d="M29 17L33 30L21 33L6 30L15 22Z" fill="#f4ec49" />
      <rect x="7" y="7" width="20" height="21" fill="#0a0a0a" /><path d="M9 25H16" stroke="#fff" strokeWidth="1.800" />
      <text x="8.500" y="18" fill="#fff" fontSize="12" fontWeight="700" fontFamily="Open Sans, sans-serif">PC</text>
    </svg>) },
];

function Taskbar() {
  return (
    <div className="flex h-[42px] shrink-0 items-stretch justify-between overflow-hidden border-t-2 border-[#6c7d93] bg-linear-to-r from-[#8ba3c2] via-[#a3bfde] via-20% to-[#a3bfde]">
      <div className="flex gap-[2px]">
        <button aria-label="开始" className="w-14 pl-[6px]">
          <svg width="37" height="37" viewBox="-18.500 -18.500 37 37">
            <defs><radialGradient id="orb" cy=".9"><stop offset="0" stopColor="#37c6ee" /><stop offset=".5" stopColor="#1f659f" /><stop offset="1" stopColor="#38536f" /></radialGradient></defs>
            <circle r="17.500" fill="url(#orb)" stroke="#a8c6dc" />
            <path d="M-16-4A16.500 16.500 0 0 1 16-4Q0 2-16-4Z" fill="#fff" opacity=".3" />
            <path d="M-7-8Q-3-11 0-8L-2-1Q-5-3-9-1Z" fill="#ee6a2c" /><path d="M2-7Q6-5 10-7L8 0Q4 2 0-1Z" fill="#93c83e" />
            <path d="M-10 1Q-6-1-3 1L-5 8Q-8 6-12 8Z" fill="#4ba5e4" /><path d="M-1 2Q3 4 7 2L5 9Q1 11-3 8Z" fill="#fbcc37" />
          </svg>
        </button>
        {apps.map((a) => (
          <button
            key={a.name}
            aria-label={a.name}
            className={`flex h-10 w-[63px] shrink-0 items-center justify-center rounded-[3px] border pb-px ${
              a.active ? 'border-[#3b4d63] bg-linear-to-br from-[#bccfe4] to-[#e8f2fb] inset-ring inset-ring-white/60' : a.open ? 'border-[#4c6079] bg-linear-to-br from-[#c3d1e1] to-[#a5bad3] inset-ring inset-ring-white/40' : 'border-transparent'
            }`}
          >
            {a.icon}
          </button>
        ))}
      </div>
      <div className="flex w-[128px] shrink-0 items-center bg-linear-to-r from-[#a3bfde] to-[#7990ab] to-25% pb-[6px] pl-[38px]">
        <svg width="17" height="17" viewBox="0 0 17 17" aria-hidden="true"><path d="M0 2L14 0L17 15L2 17Z" fill="#ef5a22" /><path d="M13 5Q5 3 5 6T12 9.500Q12 13 4 11.500" fill="none" stroke="#fff" strokeWidth="2.300" /></svg>
        <svg className="ml-[6px]" width="17" height="17" viewBox="0 0 17 17" aria-hidden="true"><circle cx="8.500" cy="8.500" r="7.800" fill="#1420a0" stroke="#c8d2e4" /><path d="M5.800 6.500Q6 4 8.500 4T11 6.300Q11 7.800 8.700 9V10.300M8.700 11.800V13.500" fill="none" stroke="#fff" strokeWidth="1.800" /></svg>
        <svg className="ml-[10px]" width="10" height="19" viewBox="0 0 10 19" fill="none" stroke="#fff" aria-hidden="true"><path d="M3 1.500H9V5H3ZM.8 4V7.500H7V5.500" strokeWidth="1.300" /><path d="M2 15H8L5 18Z" fill="#fff" stroke="none" /></svg>
        <svg className="mt-1 ml-[10px]" width="8" height="5" viewBox="0 0 8 5" fill="#fff" aria-hidden="true"><path d="M0 5H8L4 0Z" /></svg>
      </div>
    </div>
  );
}

export default function App() {
  return (
    <div className="flex h-screen min-h-[480px] w-full flex-col overflow-hidden bg-black font-['Open_Sans','Noto_Sans_CJK_SC',sans-serif]">
      <AddressBar />
      <Bookmarks />
      <EditorHeader />
      <Toolbar />
      <div className="flex min-h-0 flex-1">
        <Sidebar />
        <Canvas />
      </div>
      <Footer />
      <Status />
      <Taskbar />
      <div className="flex h-[52px] shrink-0 flex-col justify-end bg-black">
        <div className="flex h-[25px] items-center bg-[#1c1c1c] pt-[5px] pl-1">
          <input
            type="range"
            aria-label="播放进度"
            min="0"
            max="1000"
            defaultValue="395"
            className="h-[3px] w-full appearance-none bg-linear-to-r from-[#dcc400] from-[39.5%] to-[#3a3a3a] to-[39.5%] [&::-webkit-slider-thumb]:size-[13px] [&::-webkit-slider-thumb]:appearance-none [&::-webkit-slider-thumb]:rounded-full [&::-webkit-slider-thumb]:bg-[#e6e6e6]"
          />
        </div>
      </div>
    </div>
  );
}
